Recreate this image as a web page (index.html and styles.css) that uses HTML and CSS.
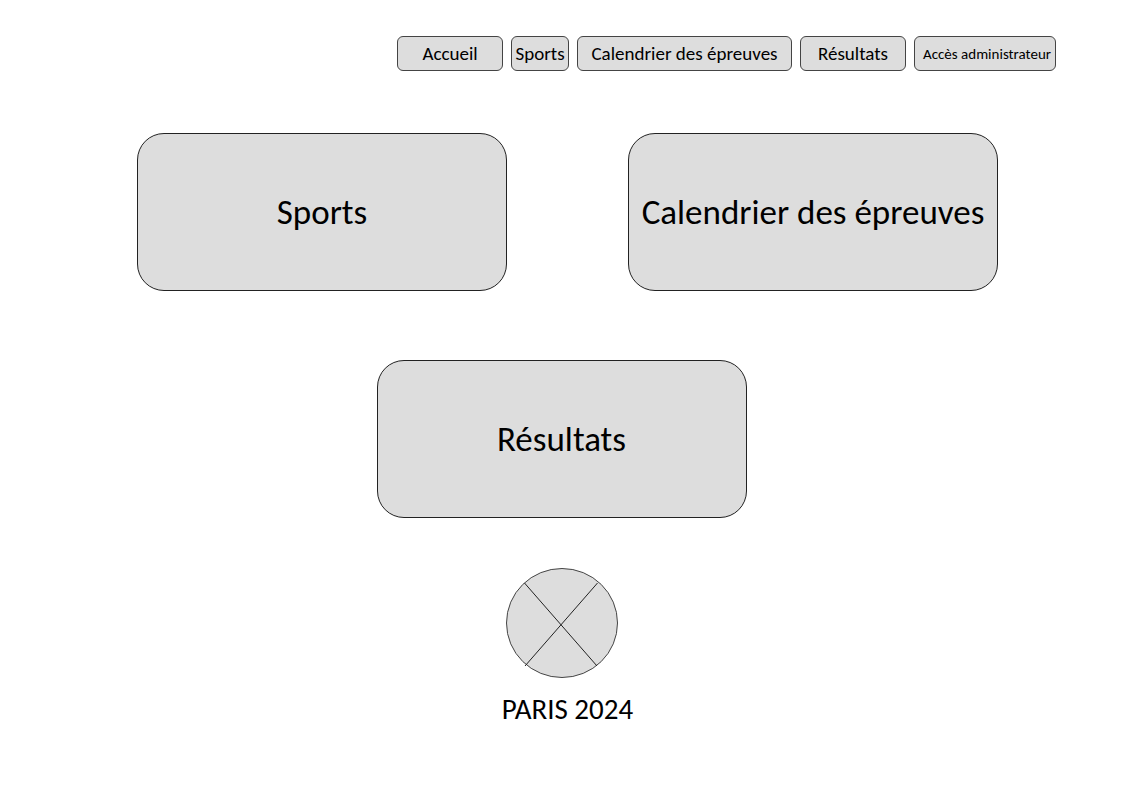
FILE: index.html
```html
<!DOCTYPE html>
<html lang="fr">
<head>
<meta charset="utf-8">
<meta name="viewport" content="width=device-width, initial-scale=1">
<title>Paris 2024</title>
<link rel="stylesheet" href="styles.css">
</head>
<body>
<header class="header">
  <nav class="nav" aria-label="Navigation principale">
    <a class="nav-link nav-medium" href="#accueil">Accueil</a>
    <a class="nav-link nav-small" href="#sports">Sports</a>
    <a class="nav-link nav-wide" href="#calendrier">Calendrier des épreuves</a>
    <a class="nav-link nav-medium" href="#resultats">Résultats</a>
    <a class="nav-link nav-admin" href="#admin">Accès administrateur</a>
  </nav>
</header>
<main class="main">
  <div class="row">
    <a class="card" href="#sports">Sports</a>
    <a class="card" href="#calendrier">Calendrier des épreuves</a>
  </div>
  <a class="card" href="#resultats">Résultats</a>
</main>
<footer class="footer">
  <svg class="logo" viewBox="0 0 112 110" role="img" aria-label="Logo">
    <ellipse cx="56" cy="55" rx="55.5" ry="54.5" fill="#dddddd" stroke="#444" />
    <path d="M18.500 15 91 98M91.500 15 19 98" fill="none" stroke="#222" />
  </svg>
  <p class="caption">PARIS 2024</p>
</footer>
</body>
</html>
```
FILE: styles.css
```css
* { box-sizing: border-box; }
body {
  margin: 0;
  background: #fff;
  color: #000;
  font-family: Carlito, Calibri, Lato, sans-serif;
}
.header { padding: 36px 67px 0 16px; }
.nav {
  display: flex;
  flex-wrap: wrap;
  justify-content: flex-end;
  gap: 8px;
}
.nav-link {
  display: flex;
  align-items: center;
  justify-content: center;
  height: 35px;
  border: 1px solid #444;
  border-radius: 6px;
  background: #dddddd;
  color: inherit;
  font-size: 19px;
  text-decoration: none;
  white-space: nowrap;
}
.nav-small { width: 58px; }
.nav-medium { width: 106px; }
.nav-wide { width: 215px; }
.nav-admin {
  width: 142px;
  padding-left: 4px;
  font-size: 15px;
}
.main {
  display: flex;
  flex-direction: column;
  align-items: center;
  gap: 69px;
  padding-top: 62px;
}
.row {
  display: flex;
  flex-wrap: wrap;
  justify-content: center;
  gap: 121px;
  padding-left: 12px;
}
.card {
  display: flex;
  align-items: center;
  justify-content: center;
  width: 370px;
  max-width: 100%;
  height: 158px;
  border: 1px solid #222;
  border-radius: 27px;
  background: #dddddd;
  color: inherit;
  font-size: 35px;
  text-align: center;
  text-decoration: none;
}
.footer {
  display: flex;
  flex-direction: column;
  align-items: center;
  padding-top: 50px;
}
.logo { width: 112px; height: 110px; }
.caption {
  margin: 14px 0 0;
  padding-left: 12px;
  font-size: 29px;
  line-height: 34px;
}
```
